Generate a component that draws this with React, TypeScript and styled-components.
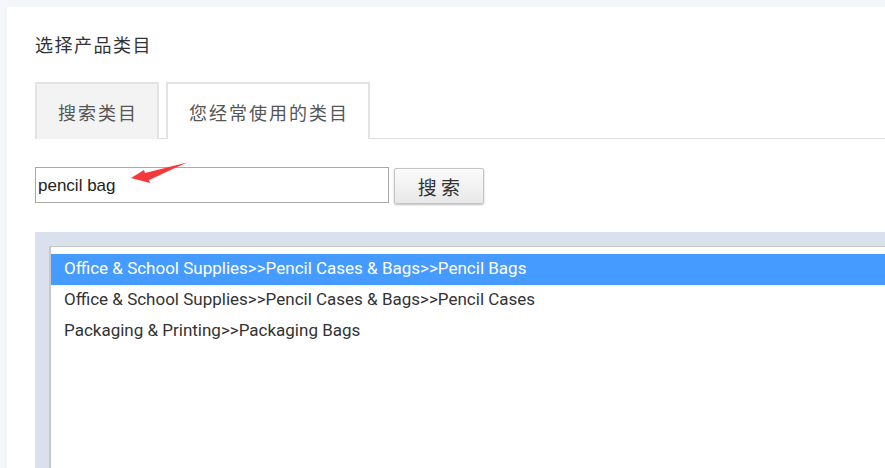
import React, { useState } from "react";
import styled, { createGlobalStyle } from "styled-components";

const GlobalStyle = createGlobalStyle`
  html, body {
    margin: 0;
    padding: 0;
    background: #f5f6fa;
    overflow: hidden;
  }
  body {
    font-family: "Liberation Sans", "Noto Sans CJK SC", sans-serif;
  }
`;

const results = [
  "Office & School Supplies>>Pencil Cases & Bags>>Pencil Bags",
  "Office & School Supplies>>Pencil Cases & Bags>>Pencil Cases",
  "Packaging & Printing>>Packaging Bags",
];

const tabs = ["搜索类目", "您经常使用的类目"];

const App = () => {
  const [tab, setTab] = useState(0);
  const [selected, setSelected] = useState(0);
  const [keyword, setKeyword] = useState("pencil bag");

  return (
    <Page>
      <GlobalStyle />
      <Panel>
        <Title>选择产品类目</Title>
        <TabBar>
          {tabs.map((t, idx) => (
            <Tab key={idx} active={idx === tab} onClick={() => setTab(idx)}>
              {t}
            </Tab>
          ))}
        </TabBar>
        <SearchRow>
          <InputWrap>
            <SearchInput
              value={keyword}
              onChange={(e) => setKeyword(e.target.value)}
            />
            <Arrow width="60" height="24" viewBox="0 0 60 24">
              <path d="M1 16 L14 8 L15 11 L57 0.5 L19 18 L20 21 Z" fill="#f5393a" />
            </Arrow>
          </InputWrap>
          <SearchBtn>搜 索</SearchBtn>
        </SearchRow>
        <ListFrame>
          <ListBox>
            {results.map((r, idx) => (
              <Item
                key={idx}
                active={idx === selected}
                onClick={() => setSelected(idx)}
              >
                {r}
              </Item>
            ))}
          </ListBox>
        </ListFrame>
      </Panel>
    </Page>
  );
};

const Page = styled.div`
  padding: 7px 0 0 7px;
  height: 468px;
  box-sizing: border-box;
`;

const Panel = styled.div`
  background: #fff;
  height: 100%;
  padding: 26px 0 0 28px;
  box-sizing: border-box;
  display: flex;
  flex-direction: column;
`;

const Title = styled.div`
  font-family: "Noto Sans CJK SC", sans-serif;
  font-size: 18px;
  letter-spacing: 1.5px;
  color: #333;
  line-height: 22px;
`;

const TabBar = styled.div`
  margin-top: 27px;
  display: flex;
  gap: 7px;
  border-bottom: 1px solid #dddddd;
  height: 56px;
`;

const Tab = styled.div<{ active: boolean }>`
  box-sizing: border-box;
  height: 57px;
  padding: 0 19px 0 21px;
  display: flex;
  align-items: center;
  font-family: "Noto Sans CJK SC", sans-serif;
  font-size: 18px;
  letter-spacing: 2px;
  color: #555;
  border: 2px solid #e3e3e3;
  border-bottom: none;
  background: ${(p) => (p.active ? "#f3f3f3" : "#fff")};
  cursor: pointer;
  margin-bottom: -1px;
`;

const SearchRow = styled.div`
  margin-top: 28px;
  display: flex;
  align-items: flex-start;
  gap: 5px;
`;

const InputWrap = styled.div`
  position: relative;
`;

const SearchInput = styled.input`
  box-sizing: border-box;
  width: 354px;
  height: 36px;
  border: 1px solid #a9a9a9;
  padding: 2px 2px 0;
  font-family: "Liberation Sans", sans-serif;
  font-size: 17px;
  color: #222;
  outline: none;
`;

const Arrow = styled.svg`
  position: absolute;
  left: 95px;
  top: -5px;
  pointer-events: none;
`;

const SearchBtn = styled.button`
  box-sizing: border-box;
  width: 90px;
  height: 36px;
  margin-top: 1px;
  border: 1px solid #c4c4c4;
  border-radius: 2px;
  background: linear-gradient(#fbfbfb, #e8e8e8);
  box-shadow: 0 1px 2px rgba(0, 0, 0, 0.25);
  font-family: "Noto Sans CJK SC", serif;
  font-size: 19px;
  color: #333;
  cursor: pointer;
`;

const ListFrame = styled.div`
  margin-top: 28px;
  flex: 1;
  background: #dae1ec;
  padding: 14px 0 0 14px;
  display: flex;
`;

const ListBox = styled.div`
  flex: 1;
  background: #fff;
  border-top: 1px solid #c8c8c8;
  border-left: 2px solid #c8c8c8;
  padding-top: 7px;
`;

const Item = styled.div<{ active: boolean }>`
  height: 31px;
  line-height: 29px;
  padding-left: 13px;
  font-family: Roboto, sans-serif;
  font-size: 17px;
  color: ${(p) => (p.active ? "#fff" : "#333")};
  background: ${(p) => (p.active ? "#459bff" : "transparent")};
  cursor: pointer;
`;

export default App;
